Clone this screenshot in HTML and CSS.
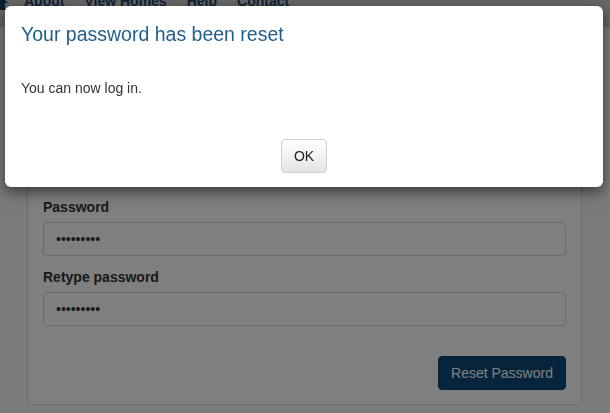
FILE: index.html
```html
<!DOCTYPE html>
<html>
<head>
<meta charset="utf-8">
<link rel="stylesheet" href="styles.css">
</head>
<body>
<header class="nav">
  <div class="nav-inner">
    <svg class="logo" width="22" height="20" viewBox="0 0 22 20"><path d="M2 12 L11 3 L20 12 L17 12 L17 19 L5 19 L5 12 Z" fill="#0f4766"/></svg>
    <a class="nav-link">About</a>
    <a class="nav-link">View Homes</a>
    <a class="nav-link">Help</a>
    <a class="nav-link">Contact</a>
  </div>
</header>
<main class="page">
  <form class="card">
    <h3 class="card-title">Reset your password</h3>
    <div class="group">
      <label class="label">Email</label>
      <div class="input">user@example.com</div>
    </div>
    <div class="group">
      <label class="label">Password</label>
      <div class="input dots">•••••••••</div>
    </div>
    <div class="group">
      <label class="label">Retype password</label>
      <div class="input dots">•••••••••</div>
    </div>
    <div class="actions">
      <button type="button" class="btn-primary">Reset Password</button>
    </div>
  </form>
</main>
<div class="overlay"></div>
<div class="dialog">
  <h2 class="dialog-title">Your password has been reset</h2>
  <p class="dialog-body">You can now log in.</p>
  <div class="dialog-footer">
    <button type="button" class="btn-default">OK</button>
  </div>
</div>
</body>
</html>
```
FILE: styles.css
```css
html, body {
  margin: 0;
  padding: 0;
}
body {
  background: #f6f6f6;
  font-family: "Liberation Sans", Arial, sans-serif;
  font-size: 14px;
  color: #333;
  width: 610px;
  height: 413px;
  overflow: hidden;
}
.nav {
  height: 36px;
  background: #cfcfcf;
}
.nav-inner {
  display: flex;
  align-items: center;
  height: 20px;
  margin-top: -9px;
}
.logo {
  margin-left: -12px;
  margin-right: 3px;
}
.nav-link {
  font-weight: bold;
  font-size: 14px;
  color: #1b4466;
  padding: 0 9px 0 11px;
}
.page {
  padding: 0 28px 0 27px;
}
.card {
  margin-top: 29px;
  background: #ffffff;
  border: 1px solid #dadada;
  border-radius: 4px;
  padding: 15px 15px 14px 15px;
}
.card-title {
  margin: 0 0 31px 0;
  font-size: 20px;
  line-height: 24px;
  font-weight: normal;
}
.group {
  display: flex;
  flex-direction: column;
  gap: 5px;
  margin-bottom: 11px;
}
.label {
  font-weight: bold;
  line-height: 20px;
  color: #333;
}
.input {
  box-sizing: border-box;
  height: 34px;
  border: 1px solid #d2d2d2;
  border-radius: 4px;
  padding: 0 12px;
  display: flex;
  align-items: center;
  color: #555;
  background: #fff;
}
.dots {
  font-size: 14px;
  color: #333;
}
.actions {
  display: flex;
  justify-content: flex-end;
  margin-top: 30px;
}
.btn-primary {
  height: 34px;
  width: 128px;
  border: 1px solid #0a3f62;
  border-radius: 4px;
  background: #0c4b79;
  color: #fff;
  font-family: "Liberation Sans", Arial, sans-serif;
  font-size: 14px;
}
.overlay {
  position: fixed;
  inset: 0;
  background: rgba(0, 0, 0, 0.5);
}
.dialog {
  position: absolute;
  left: 5px;
  top: 6px;
  width: 598px;
  height: 181px;
  box-sizing: border-box;
  background: #fff;
  border-radius: 6px;
  box-shadow: 0 5px 15px rgba(0, 0, 0, 0.55);
  padding: 15px 15px 0 15px;
  display: flex;
  flex-direction: column;
}
.dialog-title {
  margin: 0;
  font-size: 19.5px;
  line-height: 26px;
  font-weight: normal;
  color: #1f5e8c;
  padding-left: 1px;
}
.dialog-body {
  margin: 31px 0 0 1px;
  line-height: 20px;
}
.dialog-footer {
  display: flex;
  justify-content: center;
  margin-top: 41px;
}
.btn-default {
  width: 46px;
  height: 34px;
  border: 1px solid #cfcfcf;
  border-radius: 4px;
  background: linear-gradient(#ffffff, #e4e4e4);
  color: #222;
  font-family: "Liberation Sans", Arial, sans-serif;
  font-size: 14px;
}
```
